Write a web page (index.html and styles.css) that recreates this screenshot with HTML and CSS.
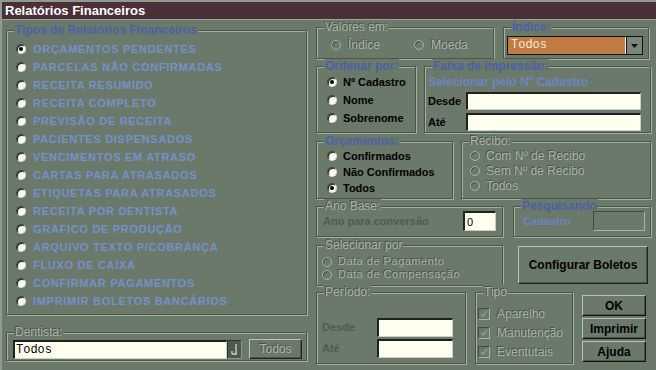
FILE: index.html
```html
<!DOCTYPE html>
<html lang="pt-BR">
<head>
    <meta charset="UTF-8">
    <title>Relatórios Financeiros</title>
    <link rel="stylesheet" href="styles.css">
</head>
<body>
<div class="window">
    <div class="titlebar">Relatórios Financeiros</div>
    <div class="main">
        <div class="col-left">
            <div class="group tipos">
                <span class="group-title blue">Tipos de Relatórios Financeiros</span>
                <ul class="report-list">
                    <li><span class="radio on"></span>ORÇAMENTOS PENDENTES</li>
                    <li><span class="radio"></span>PARCELAS NÃO CONFIRMADAS</li>
                    <li><span class="radio"></span>RECEITA RESUMIDO</li>
                    <li><span class="radio"></span>RECEITA COMPLETO</li>
                    <li><span class="radio"></span>PREVISÃO DE RECEITA</li>
                    <li><span class="radio"></span>PACIENTES DISPENSADOS</li>
                    <li><span class="radio"></span>VENCIMENTOS EM ATRASO</li>
                    <li><span class="radio"></span>CARTAS PARA ATRASADOS</li>
                    <li><span class="radio"></span>ETIQUETAS PARA ATRASADOS</li>
                    <li><span class="radio"></span>RECEITA POR DENTISTA</li>
                    <li><span class="radio"></span>GRÁFICO DE PRODUÇÃO</li>
                    <li><span class="radio"></span>ARQUIVO TEXTO P/COBRANÇA</li>
                    <li><span class="radio"></span>FLUXO DE CAIXA</li>
                    <li><span class="radio"></span>CONFIRMAR PAGAMENTOS</li>
                    <li><span class="radio"></span>IMPRIMIR BOLETOS BANCÁRIOS</li>
                </ul>
            </div>
            <div class="group dentista">
                <span class="group-title off">Dentista:</span>
                <div class="dentista-row">
                    <span class="field mono dentista-field">Todos</span>
                    <span class="combo-btn dark">
                        <svg width="9" height="13" viewBox="0 0 9 13"><path d="M6 1v10M2 11h5M2 8v3" stroke="#c9d1c6" stroke-width="1.4" fill="none"/></svg>
                    </span>
                    <span class="btn off todos-btn">Todos</span>
                </div>
            </div>
        </div>

        <div class="col-right">
            <div class="row r1">
                <div class="group valores">
                    <span class="group-title off">Valores em:</span>
                    <div class="inline-radios">
                        <span class="opt off"><span class="radio dim"></span>Índice</span>
                        <span class="opt off moeda"><span class="radio dim"></span>Moeda</span>
                    </div>
                </div>
                <div class="group indice">
                    <span class="group-title blue">Índice:</span>
                    <div class="select">
                        <span class="select-value mono">Todos</span>
                        <span class="select-btn"><svg width="7" height="4" viewBox="0 0 7 4"><path d="M0 0h7L3.5 4z" fill="#111"/></svg></span>
                    </div>
                </div>
            </div>

            <div class="row r2">
                <div class="group ordenar">
                    <span class="group-title blue">Ordenar por:</span>
                    <div class="opt-list tall">
                        <span class="opt"><span class="radio on"></span>Nº Cadastro</span>
                        <span class="opt"><span class="radio"></span>Nome</span>
                        <span class="opt"><span class="radio"></span>Sobrenome</span>
                    </div>
                </div>
                <div class="group faixa">
                    <span class="group-title blue">Faixa de Impressão:</span>
                    <div class="faixa-sub">Selecionar pelo Nº Cadastro</div>
                    <div class="form-row"><span class="form-label">Desde</span><span class="field wide"></span></div>
                    <div class="form-row"><span class="form-label">Até</span><span class="field wide"></span></div>
                </div>
            </div>

            <div class="row r3">
                <div class="group orcamentos">
                    <span class="group-title blue">Orçamentos:</span>
                    <div class="opt-list mid">
                        <span class="opt"><span class="radio"></span>Confirmados</span>
                        <span class="opt"><span class="radio"></span>Não Confirmados</span>
                        <span class="opt"><span class="radio on"></span>Todos</span>
                    </div>
                </div>
                <div class="group recibo">
                    <span class="group-title off">Recibo:</span>
                    <div class="opt-list short">
                        <span class="opt off"><span class="radio dim"></span>Com Nº de Recibo</span>
                        <span class="opt off"><span class="radio dim"></span>Sem Nº de Recibo</span>
                        <span class="opt off"><span class="radio dim"></span>Todos</span>
                    </div>
                </div>
            </div>

            <div class="row r4">
                <div class="group ano">
                    <span class="group-title off">Ano Base:</span>
                    <div class="ano-row">
                        <span class="gray-label">Ano para conversão</span>
                        <span class="field small-field">0</span>
                    </div>
                </div>
                <div class="group pesquisa">
                    <span class="group-title blue">Pesquisando</span>
                    <div class="ano-row">
                        <span class="pesq-label">Cadastro</span>
                        <span class="empty-box"></span>
                    </div>
                </div>
            </div>

            <div class="row r5">
                <div class="group selecionar">
                    <span class="group-title off">Selecionar por</span>
                    <div class="opt-list tight">
                        <span class="opt off"><span class="radio dim"></span>Data de Pagamento</span>
                        <span class="opt off"><span class="radio dim"></span>Data de Compensação</span>
                    </div>
                </div>
                <span class="btn config-btn">Configurar Boletos</span>
            </div>

            <div class="row r6">
                <div class="group periodo">
                    <span class="group-title off">Período:</span>
                    <div class="periodo-rows">
                        <div class="form-row"><span class="gray-label per-label">Desde</span><span class="field per-field"></span></div>
                        <div class="form-row"><span class="gray-label per-label">Até</span><span class="field per-field"></span></div>
                    </div>
                </div>
                <div class="group tipo">
                    <span class="group-title off">Tipo</span>
                    <div class="opt-list checks">
                        <span class="opt off"><span class="check"><svg width="10" height="10" viewBox="0 0 10 10"><path d="M2 5l2 2 4-5" stroke="#8e9a8b" stroke-width="1.6" fill="none"/></svg></span>Aparelho</span>
                        <span class="opt off"><span class="check"><svg width="10" height="10" viewBox="0 0 10 10"><path d="M2 5l2 2 4-5" stroke="#8e9a8b" stroke-width="1.6" fill="none"/></svg></span>Manutenção</span>
                        <span class="opt off"><span class="check"><svg width="10" height="10" viewBox="0 0 10 10"><path d="M2 5l2 2 4-5" stroke="#8e9a8b" stroke-width="1.6" fill="none"/></svg></span>Eventutais</span>
                    </div>
                </div>
                <div class="actions">
                    <span class="btn act-btn">OK</span>
                    <span class="btn act-btn">Imprimir</span>
                    <span class="btn act-btn">Ajuda</span>
                </div>
            </div>
        </div>
    </div>
</div>
</body>
</html>
```

FILE: styles.css
```css
body {
    margin: 0;
    font-family: "Liberation Sans", Arial, sans-serif;
    font-size: 11px;
    background-color: #6a7969;
}

.window {
    width: 656px;
    height: 370px;
    box-sizing: border-box;
    background-color: #6a7969;
    border-top: 2px solid #8f9b8d;
    border-left: 2px solid #8f9b8d;
    display: flex;
    flex-direction: column;
}

.titlebar {
    height: 17px;
    line-height: 17px;
    background-color: #4b2f38;
    color: #fff;
    font-weight: bold;
    font-size: 13px;
    padding-left: 3px;
    border-bottom: 1px solid #9aa697;
}

.main {
    display: flex;
    padding-left: 4px;
}

.col-left {
    width: 301px;
    padding-top: 10px;
    display: flex;
    flex-direction: column;
}

.col-right {
    width: 335px;
    margin-left: 9px;
    padding-top: 7px;
    display: flex;
    flex-direction: column;
}

/* etched group boxes */
.group {
    box-sizing: border-box;
    border: 1px solid #4b564a;
    box-shadow: inset 1px 1px 0 #a3afa0, 1px 1px 0 #a3afa0;
    display: flex;
    flex-direction: column;
}

.group-title {
    display: block;
    width: fit-content;
    height: 14px;
    line-height: 14px;
    margin: -8px 0 0 7px;
    padding: 0 1px;
    background-color: #6a7969;
    font-size: 12px;
    white-space: nowrap;
}

.group-title.blue {
    color: #4b61a5;
    font-weight: bold;
    font-size: 12px;
}

.off {
    color: #a9b4a6;
    text-shadow: -1px -1px 0 #485347;
}

.mono {
    font-family: "Liberation Mono", "Courier New", monospace;
    font-size: 12px;
}

/* radios and checks */
.radio {
    display: inline-block;
    box-sizing: border-box;
    width: 10px;
    height: 10px;
    border-radius: 50%;
    background-color: #fbfbee;
    box-shadow: inset 1px 1px 0 #1c1f1c;
    border: 1px solid #3a433a;
    border-right-color: #d8ded4;
    border-bottom-color: #d8ded4;
    position: relative;
    flex-shrink: 0;
}

.radio.on::after {
    content: "";
    position: absolute;
    left: 2px;
    top: 2px;
    width: 4px;
    height: 4px;
    border-radius: 50%;
    background-color: #000;
}

.radio.dim {
    background-color: transparent;
    border: 1px solid #a9b4a6;
    box-shadow: inset 1px 1px 0 #485347;
}

.check {
    display: inline-flex;
    align-items: center;
    justify-content: center;
    box-sizing: border-box;
    width: 12px;
    height: 12px;
    border: 1px solid #a9b4a6;
    border-top-color: #3f493e;
    border-left-color: #3f493e;
    background-color: #6a7969;
    flex-shrink: 0;
}

/* left list */
.tipos {
    height: 285px;
}

.report-list {
    list-style-type: none;
    margin: 3px 0 0 0;
    padding: 0 0 0 9px;
}

.report-list li {
    height: 18px;
    display: flex;
    align-items: center;
    gap: 7px;
    color: #7690cc;
    font-weight: bold;
    letter-spacing: 0.7px;
    white-space: nowrap;
}

.dentista {
    height: 29px;
    margin-top: 17px;
}

.dentista-row {
    display: flex;
    align-items: flex-start;
    margin: 1px 0 0 6px;
}

.field {
    box-sizing: border-box;
    background-color: #fffff0;
    border-top: 2px solid #1e211e;
    border-left: 2px solid #1e211e;
    border-right: 1px solid #c8d0c6;
    border-bottom: 1px solid #c8d0c6;
    display: flex;
    align-items: center;
    padding-left: 1px;
    color: #000;
}

.dentista-field {
    width: 214px;
    height: 19px;
}

.combo-btn {
    box-sizing: border-box;
    width: 15px;
    height: 19px;
    background-color: #4e5a4e;
    border: 1px solid #8d998a;
    border-top-color: #2d342d;
    border-left-color: #2d342d;
    display: flex;
    align-items: center;
    justify-content: center;
}

.btn {
    box-sizing: border-box;
    display: flex;
    align-items: center;
    justify-content: center;
    border: 1px solid #1f261f;
    border-top-color: #b8c2b5;
    border-left-color: #b8c2b5;
    box-shadow: inset -1px -1px 0 #4b564a;
    font-weight: bold;
    color: #000;
    white-space: nowrap;
}

.btn.off {
    color: #a9b4a6;
    text-shadow: -1px -1px 0 #485347;
    font-weight: normal;
}

.todos-btn {
    width: 53px;
    height: 20px;
    margin-left: 7px;
    margin-top: -1px;
    font-size: 12px;
}

/* right column rows */
.row {
    display: flex;
    align-items: flex-start;
}

.r2 { margin-top: 7px; }
.r3 { margin-top: 8px; }
.r4 { margin-top: 7px; }
.r5 { margin-top: 8px; }
.r6 { margin-top: 6px; }

.valores {
    width: 178px;
    height: 32px;
}

.inline-radios {
    display: flex;
    margin: 4px 0 0 14px;
    height: 14px;
}

.opt {
    display: flex;
    align-items: center;
    gap: 5px;
    font-weight: bold;
    color: #000;
    white-space: nowrap;
}

.opt.off {
    font-weight: normal;
    font-size: 12px;
    line-height: 12px;
    color: #a9b4a6;
}

.inline-radios .opt {
    gap: 7px;
}

.moeda {
    margin-left: 34px;
}

.indice {
    width: 146px;
    height: 32px;
    margin-left: 9px;
}

.select {
    display: flex;
    margin: 2px 0 0 3px;
    height: 19px;
    width: 136px;
    box-sizing: border-box;
    border: 1px solid #111;
}

.select-value {
    flex: 1;
    background-color: #c27a44;
    color: #f6eedc;
    border-right: 1px solid #fffff0;
    padding-left: 3px;
    line-height: 17px;
}

.select-btn {
    width: 15px;
    background-color: #7a877a;
    border-left: 1px solid #111;
    display: flex;
    align-items: center;
    justify-content: center;
}

.ordenar {
    width: 100px;
    height: 67px;
}

.opt-list {
    display: flex;
    flex-direction: column;
    padding-left: 10px;
}

.opt-list .opt {
    gap: 6px;
}

.opt-list.tall .opt { height: 18px; }
.opt-list.mid .opt { height: 16px; }
.opt-list.short .opt { height: 15px; }

.faixa {
    width: 227px;
    height: 67px;
    margin-left: 8px;
}

.faixa-sub {
    color: #6d86c2;
    font-weight: bold;
    font-size: 12px;
    line-height: 14px;
    margin: 2px 0 0 3px;
    white-space: nowrap;
}

.form-row {
    display: flex;
    align-items: center;
    height: 18px;
    margin-top: 3px;
}

.form-label {
    width: 41px;
    padding-left: 3px;
    box-sizing: border-box;
    font-weight: bold;
    color: #000;
}

.field.wide {
    width: 175px;
    height: 18px;
}

.orcamentos {
    width: 137px;
    height: 58px;
}

.recibo {
    width: 190px;
    height: 58px;
    margin-left: 8px;
}

.recibo .opt-list {
    padding-left: 8px;
}

.ano {
    width: 187px;
    height: 31px;
}

.ano-row {
    display: flex;
    align-items: center;
    justify-content: space-between;
    height: 20px;
    margin: -2px 6px 0 6px;
}

.gray-label {
    font-weight: bold;
    color: #4f5b4f;
    white-space: nowrap;
}

.small-field {
    width: 33px;
    height: 20px;
    padding-left: 2px;
}

.pesquisa {
    width: 138px;
    height: 31px;
    margin-left: 10px;
}

.pesq-label {
    color: #6a84c0;
    font-weight: bold;
    margin-left: 3px;
}

.empty-box {
    box-sizing: border-box;
    width: 52px;
    height: 20px;
    border: 1px solid #a9b4a6;
    border-top-color: #3f493e;
    border-left-color: #3f493e;
    margin-right: -1px;
}

.selecionar {
    width: 187px;
    height: 41px;
}

.opt-list.tight {
    margin-top: 3px;
    padding-left: 5px;
}

.opt-list.tight .opt {
    height: 13px;
    font-size: 11px;
    line-height: 13px;
    letter-spacing: 0.5px;
}

.config-btn {
    width: 130px;
    height: 38px;
    margin: 1px 0 0 15px;
    font-size: 12px;
}

.periodo {
    width: 150px;
    height: 72px;
}

.periodo-rows {
    margin-top: 16px;
}

.per-label {
    width: 60px;
    padding-left: 5px;
    box-sizing: border-box;
}

.field.per-field {
    width: 76px;
    height: 19px;
}

.tipo {
    width: 98px;
    height: 72px;
    margin-left: 9px;
}

.opt-list.checks {
    padding-left: 2px;
    margin-top: 5px;
}

.opt-list.checks .opt {
    height: 19px;
    gap: 7px;
}

.actions {
    display: flex;
    flex-direction: column;
    gap: 2px;
    margin: 3px 0 0 9px;
}

.act-btn {
    width: 64px;
    height: 21px;
    font-size: 12px;
    border-color: #111;
    border-top-color: #b8c2b5;
    border-left-color: #b8c2b5;
}
```
